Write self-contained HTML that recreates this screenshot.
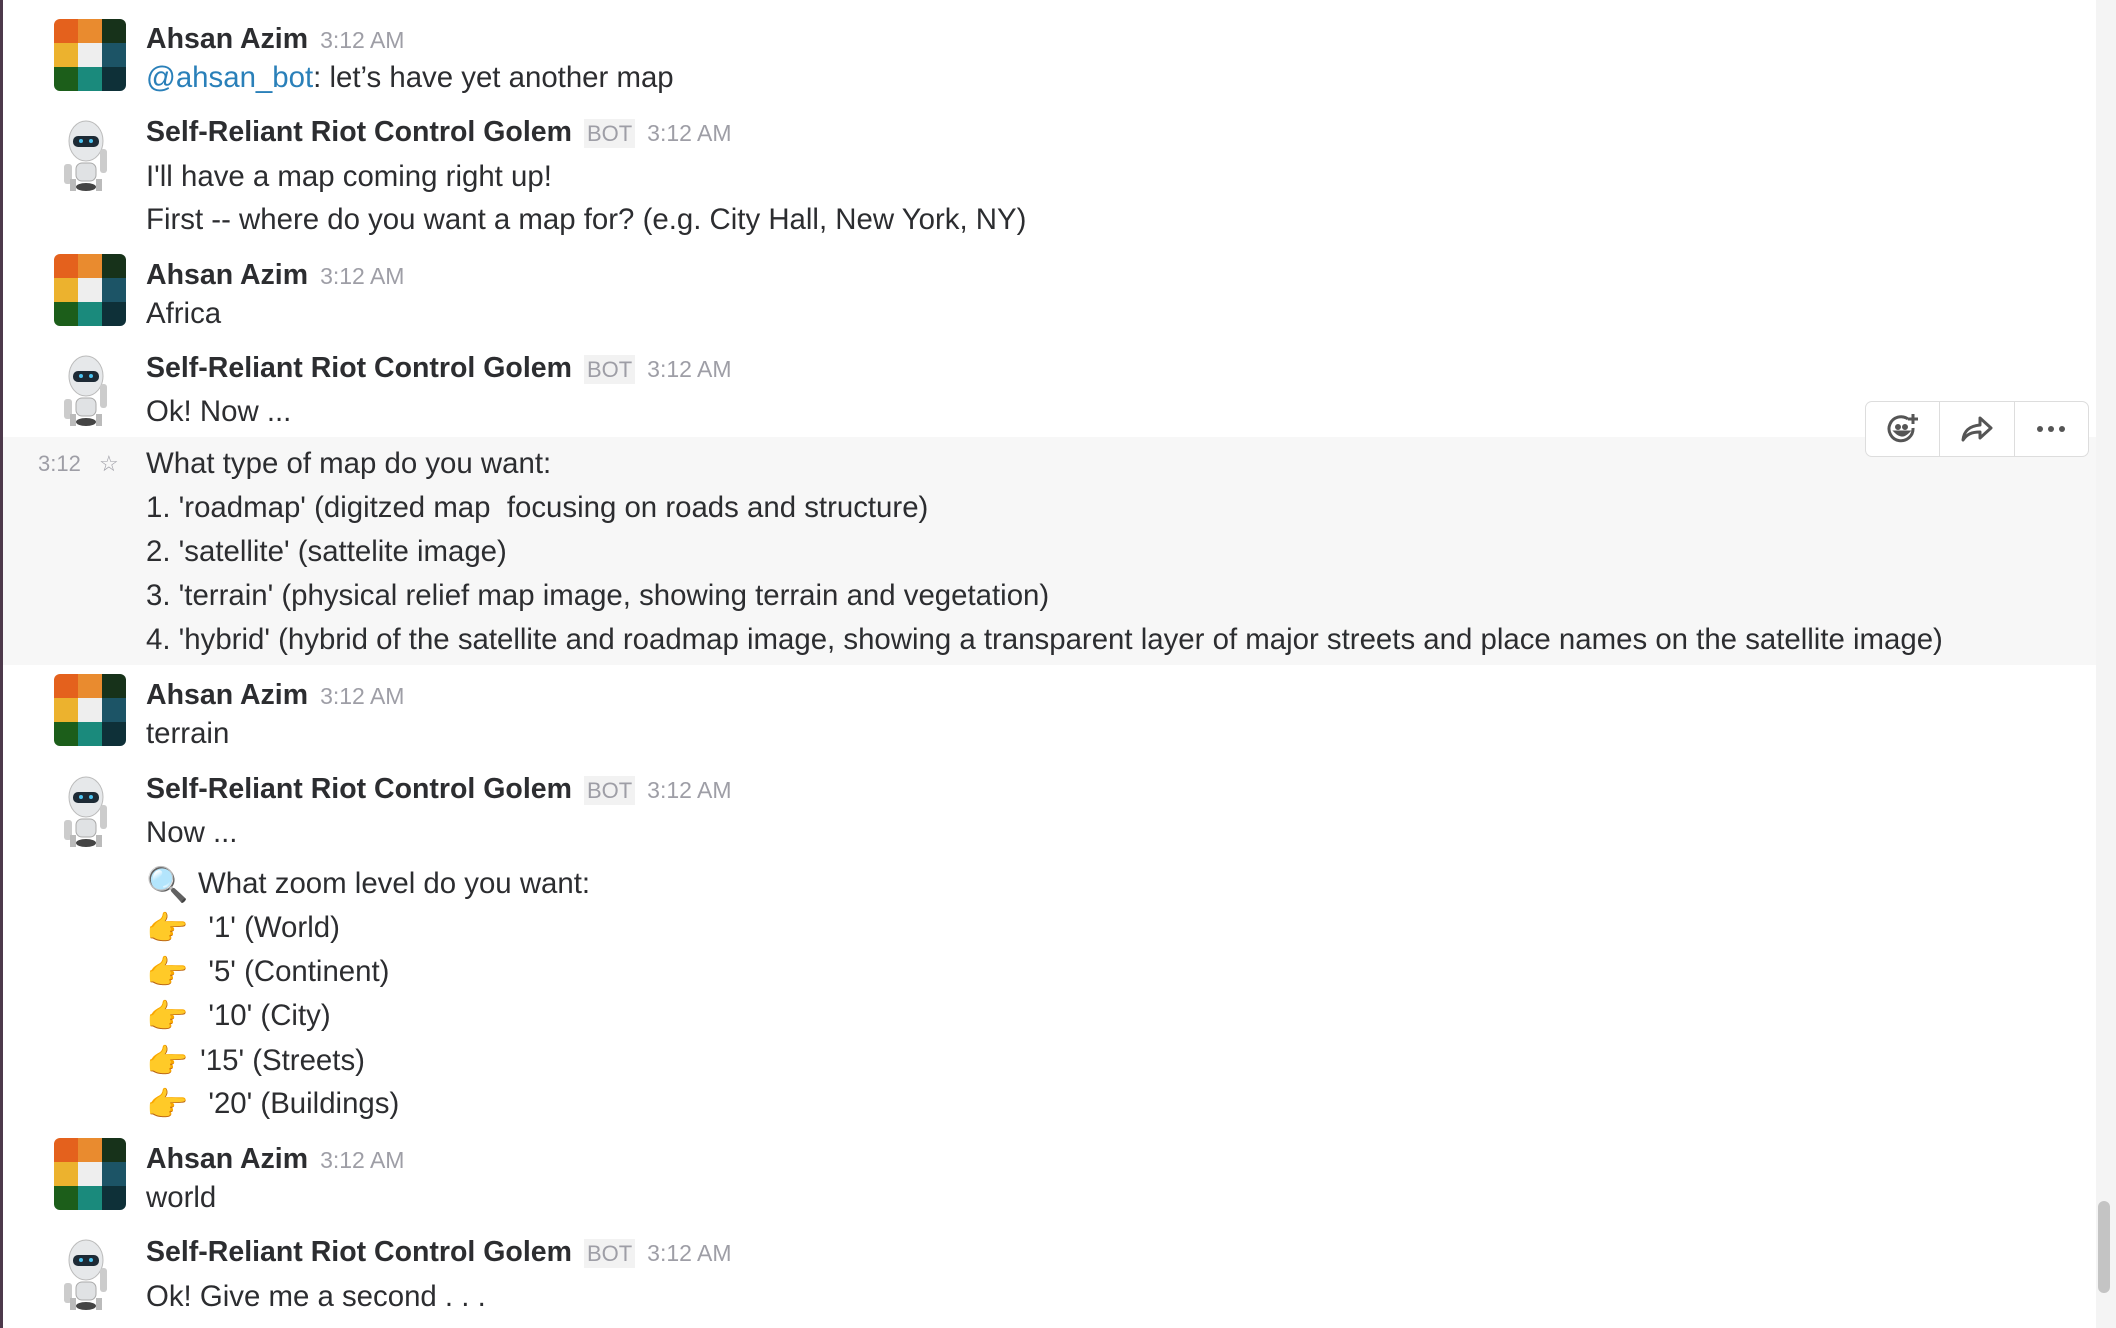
<!DOCTYPE html>
<html><head><meta charset="utf-8"><style>
body{margin:0;width:2116px;height:1328px;background:#fff;position:relative;overflow:hidden;font-family:"Liberation Sans",sans-serif;color:#2c2d30}
.l{position:absolute;left:146px;font-size:29.4px;white-space:nowrap;line-height:40px}
.n{position:absolute;left:146px;font-size:28.5px;font-weight:bold;white-space:nowrap;line-height:40px;color:#2c2d30}
.n .t{font-weight:normal;font-size:23px;color:#9e9ea6;margin-left:12px;letter-spacing:0}
.n .b{font-weight:normal;font-size:22px;color:#9e9ea6;background:#f2f2f2;padding:2px 3px;margin-left:12px;letter-spacing:0}
.av{position:absolute;left:54px;width:72px;height:72px;border-radius:6px;overflow:hidden}
.rb{position:absolute;left:56px;width:72px;height:76px}
.e{display:inline-block;width:46px;font-size:34px;vertical-align:-3px}
</style></head><body>
<div style="position:absolute;left:0;top:0;width:3px;height:1328px;background:#4d394b"></div>
<div style="position:absolute;left:3px;top:437px;width:2093px;height:228px;background:#f7f7f7"></div>
<div style="position:absolute;left:2096px;top:0;width:20px;height:1328px;background:#f4f4f4"></div>
<div style="position:absolute;left:2098px;top:1201px;width:12px;height:92px;background:#c4c4c4;border-radius:6px"></div>

<svg width="0" height="0" style="position:absolute"><defs>
<g id="av"><rect x="0" y="0" width="24" height="24" fill="#e4611d"/><rect x="24" y="0" width="24" height="24" fill="#e98b2f"/><rect x="48" y="0" width="24" height="24" fill="#17321a"/>
<rect x="0" y="24" width="24" height="24" fill="#ecb22e"/><rect x="24" y="24" width="24" height="24" fill="#eeeeee"/><rect x="48" y="24" width="24" height="24" fill="#1c5466"/>
<rect x="0" y="48" width="24" height="24" fill="#1c5e1a"/><rect x="24" y="48" width="24" height="24" fill="#1a8a7c"/><rect x="48" y="48" width="24" height="24" fill="#0e3038"/></g>
<g id="rb"><ellipse cx="30" cy="22" rx="17" ry="20" fill="#e6e8ea" stroke="#bbb"/><rect x="17" y="17" width="26" height="11" rx="5" fill="#1d2a35"/><circle cx="25" cy="22" r="2" fill="#4cc3f0"/><circle cx="35" cy="22" r="2" fill="#4cc3f0"/>
<rect x="20" y="44" width="20" height="18" rx="6" fill="#e0e2e4" stroke="#aaa"/><rect x="8" y="45" width="8" height="20" rx="3" fill="#ccc"/><rect x="44" y="30" width="7" height="24" rx="3" fill="#ccc"/><ellipse cx="30" cy="68" rx="10" ry="4" fill="#444"/><rect x="14" y="60" width="6" height="12" fill="#bbb"/><rect x="40" y="60" width="6" height="12" fill="#bbb"/></g>
</defs></svg>

<svg class="av" style="top:19px" viewBox="0 0 72 72"><use href="#av"/></svg>
<div class="n" style="top:19px">Ahsan Azim<span class="t">3:12 AM</span></div>
<div class="l" style="top:58px"><span style="color:#2a80b9">@ahsan_bot</span>: let’s have yet another map</div>

<svg class="rb" style="top:119px" viewBox="0 0 72 76"><use href="#rb"/></svg>
<div class="n" style="top:112px">Self-Reliant Riot Control Golem<span class="b">BOT</span><span class="t">3:12 AM</span></div>
<div class="l" style="top:157px">I'll have a map coming right up!</div>
<div class="l" style="top:200px">First -- where do you want a map for? (e.g. City Hall, New York, NY)</div>

<svg class="av" style="top:254px" viewBox="0 0 72 72"><use href="#av"/></svg>
<div class="n" style="top:255px">Ahsan Azim<span class="t">3:12 AM</span></div>
<div class="l" style="top:294px">Africa</div>

<svg class="rb" style="top:354px" viewBox="0 0 72 76"><use href="#rb"/></svg>
<div class="n" style="top:348px">Self-Reliant Riot Control Golem<span class="b">BOT</span><span class="t">3:12 AM</span></div>
<div class="l" style="top:392px">Ok! Now ...</div>

<div style="position:absolute;left:38px;top:450px;font-size:22px;color:#9e9ea6;line-height:28px">3:12 <span style="margin-left:12px">☆</span></div>
<div class="l" style="top:444px">What type of map do you want:</div>
<div class="l" style="top:488px">1. 'roadmap' (digitzed map &nbsp;focusing on roads and structure)</div>
<div class="l" style="top:532px">2. 'satellite' (sattelite image)</div>
<div class="l" style="top:576px">3. 'terrain' (physical relief map image, showing terrain and vegetation)</div>
<div class="l" style="top:620px">4. 'hybrid' (hybrid of the satellite and roadmap image, showing a transparent layer of major streets and place names on the satellite image)</div>

<div style="position:absolute;left:1865px;top:401px;width:222px;height:54px;border:1px solid #ddd;border-radius:7px;background:#fff;display:flex">
<div style="flex:1;border-right:1px solid #ddd;display:flex;align-items:center;justify-content:center"><svg width="34" height="34" viewBox="0 0 34 34" fill="none" stroke="#555" stroke-width="3"><path d="M22 7A12 12 0 1 0 27 16"/><circle cx="12" cy="15" r="1.5" fill="#555"/><circle cx="19" cy="15" r="1.5" fill="#555"/><path d="M10 20q6 6 12 0z" fill="#555"/><path d="M27 2v10M22 7h10"/></svg></div>
<div style="flex:1;border-right:1px solid #ddd;display:flex;align-items:center;justify-content:center"><svg width="34" height="30" viewBox="0 0 34 30" fill="none" stroke="#555" stroke-width="3" stroke-linejoin="round"><path d="M20 4l11 10-11 10v-6c-8 0-13 2-17 8 1-9 6-14 17-15z"/></svg></div>
<div style="flex:1;display:flex;align-items:center;justify-content:center;gap:5px"><i style="width:6px;height:6px;border-radius:3px;background:#555"></i><i style="width:6px;height:6px;border-radius:3px;background:#555"></i><i style="width:6px;height:6px;border-radius:3px;background:#555"></i></div>
</div>

<svg class="av" style="top:674px" viewBox="0 0 72 72"><use href="#av"/></svg>
<div class="n" style="top:675px">Ahsan Azim<span class="t">3:12 AM</span></div>
<div class="l" style="top:714px">terrain</div>

<svg class="rb" style="top:775px" viewBox="0 0 72 76"><use href="#rb"/></svg>
<div class="n" style="top:769px">Self-Reliant Riot Control Golem<span class="b">BOT</span><span class="t">3:12 AM</span></div>
<div class="l" style="top:813px">Now ...</div>
<div class="l" style="top:864px"><span class="e" style="width:52px">🔍</span>What zoom level do you want:</div>
<div class="l" style="top:908px"><span class="e">👉</span> &nbsp;'1' (World)</div>
<div class="l" style="top:952px"><span class="e">👉</span> &nbsp;'5' (Continent)</div>
<div class="l" style="top:996px"><span class="e">👉</span> &nbsp;'10' (City)</div>
<div class="l" style="top:1041px"><span class="e">👉</span> '15' (Streets)</div>
<div class="l" style="top:1084px"><span class="e">👉</span> &nbsp;'20' (Buildings)</div>

<svg class="av" style="top:1138px" viewBox="0 0 72 72"><use href="#av"/></svg>
<div class="n" style="top:1139px">Ahsan Azim<span class="t">3:12 AM</span></div>
<div class="l" style="top:1178px">world</div>

<svg class="rb" style="top:1238px" viewBox="0 0 72 76"><use href="#rb"/></svg>
<div class="n" style="top:1232px">Self-Reliant Riot Control Golem<span class="b">BOT</span><span class="t">3:12 AM</span></div>
<div class="l" style="top:1277px">Ok! Give me a second . . .</div>
</body></html>
